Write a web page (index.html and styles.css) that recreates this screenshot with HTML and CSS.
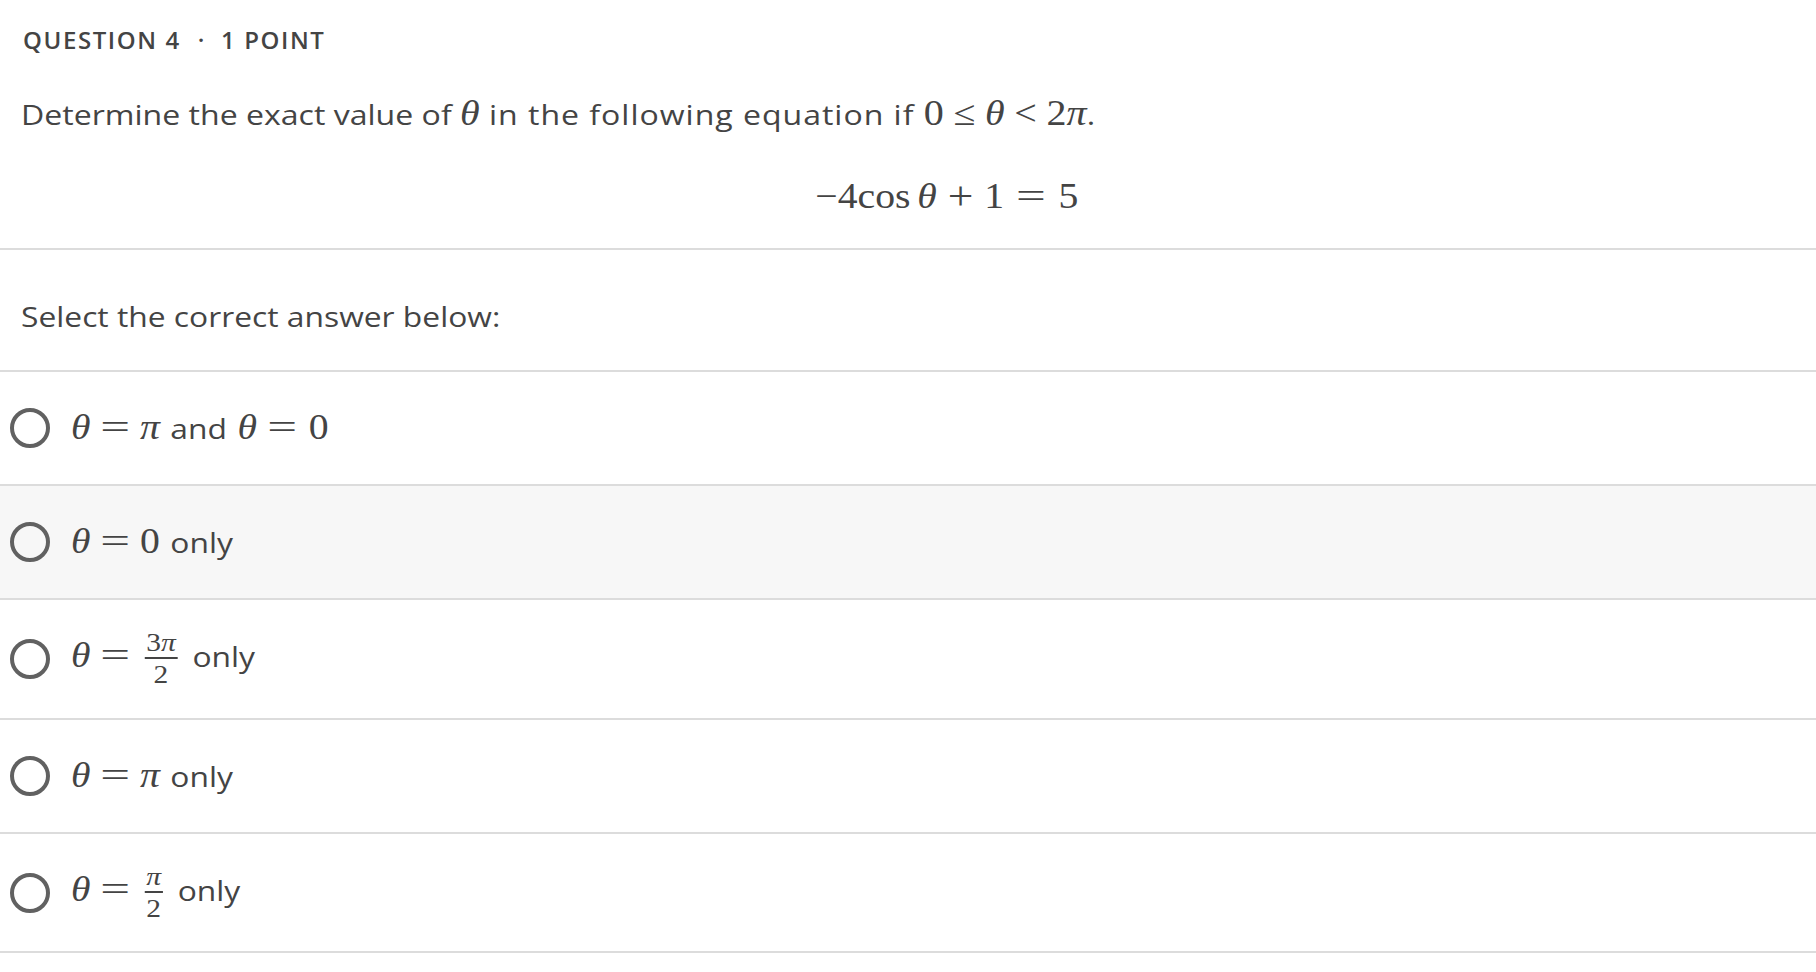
FILE: index.html
```html
<!DOCTYPE html>
<html>
<head>
<meta charset="utf-8">
<link rel="stylesheet" href="styles.css">
</head>
<body>
<div class="question">
  <div class="qhead">QUESTION 4<span class="sep">·</span>1 POINT</div>
  <p class="prompt"><span class="wide wide-prompt">Determine the exact value of <span class="m"><i>θ</i></span><span class="spread"> in the following equation if </span><span class="m">0<span class="rel">≤</span><i>θ</i><span class="rel">&lt;</span>2<i>π</i></span>.</span></p>
  <div class="display"><span class="m eqn">−4cos<span class="thin"></span><i>θ</i><span class="bin">+</span>1<span class="eq">=</span>5</span></div>
</div>
<div class="select"><span class="wide">Select the correct answer below:</span></div>
<div class="options">
  <div class="opt"><span class="radio"></span><span class="label"><span class="m"><i>θ</i><span class="eq">=</span><i>π</i></span> and <span class="m m-after"><i>θ</i><span class="eq">=</span>0</span></span></div>
  <div class="opt hover"><span class="radio"></span><span class="label"><span class="m"><i>θ</i><span class="eq">=</span>0</span> only</span></div>
  <div class="opt tall"><span class="radio"></span><span class="label"><span class="m"><i>θ</i><span class="eq">=</span><span class="frac"><span class="num">3<i>π</i></span><span class="den">2</span></span></span> only</span></div>
  <div class="opt"><span class="radio"></span><span class="label"><span class="m"><i>θ</i><span class="eq">=</span><i>π</i></span> only</span></div>
  <div class="opt tall last"><span class="radio"></span><span class="label"><span class="m"><i>θ</i><span class="eq">=</span><span class="frac"><span class="num"><i>π</i></span><span class="den">2</span></span></span> only</span></div>
</div>
</body>
</html>
```
FILE: styles.css
```css
* { box-sizing: border-box; }
body {
  margin: 0;
  background: #fff;
  color: #444;
  font-family: "Open Sans", sans-serif;
}
.qhead {
  padding: 24px 0 0 23px;
  font-size: 24px;
  font-weight: 600;
  line-height: 32px;
  letter-spacing: 1.6px;
  color: #444;
}
.sep { margin: 0 15px 0 17px; }
.wide {
  display: inline-block;
  transform: scaleX(1.135);
  transform-origin: 0 50%;
  white-space: nowrap;
}
.wide-prompt { transform: scaleX(1.145); }
.spread { letter-spacing: 0.85px; }
.prompt {
  margin: 38px 0 0;
  padding-left: 21px;
  font-size: 28px;
  line-height: 40px;
}
.prompt .rel { margin: 0 0.24em; }
.display {
  padding: 42px 0 31px 78px;
  text-align: center;
  font-size: 28px;
  line-height: 40px;
}
.m {
  font-family: "Liberation Serif", serif;
  font-size: 35px;
  color: #444;
}
.m i { font-style: italic; }
.eqn {
  display: inline-block;
  transform: scaleX(1.135);
}
.rel { margin: 0 0.28em; }
.bin { margin: 0 0.24em; font-size: 40px; line-height: 1; vertical-align: -1px; }
.thin { display: inline-block; width: 0.17em; }
.eq {
  display: inline-block;
  width: 22px;
  margin: 0 11px 0 10.5px;
  text-align: center;
  transform: scaleX(1.33);
}
.eqn .eq { margin: 0 13px 0 13px; }
.select {
  border-top: 2px solid #dcdcdc;
  height: 122px;
  padding: 45.5px 0 0 21px;
  font-size: 28px;
  line-height: 40px;
}
.opt {
  display: flex;
  align-items: center;
  height: 114px;
  padding-left: 10px;
  border-top: 2px solid #dcdcdc;
}
.opt.tall { height: 120px; }
.opt.last { height: 121px; border-bottom: 2px solid #dcdcdc; }
.opt.hover { background: #f7f7f7; }
.radio {
  flex-shrink: 0;
  width: 40px;
  height: 40px;
  border: 4px solid #616161;
  border-radius: 50%;
  margin-right: 21px;
}
.label {
  display: inline-block;
  font-size: 28px;
  line-height: 40px;
  white-space: nowrap;
  transform: scaleX(1.135);
  transform-origin: 0 50%;
}
.label .m { margin-right: 2px; }
.label .m-after { margin-left: 2px; }
.m-after .eq { margin: 0 12px 0 11.5px; }
.frac {
  display: inline-block;
  vertical-align: -16px;
  font-family: "Liberation Serif", serif;
  font-size: 26px;
  line-height: 24px;
  text-align: center;
  margin: 0 4px;
}
.num, .den { display: block; padding: 0 1.5px; }
.num { padding-bottom: 2px; border-bottom: 2px solid #444; }
.den { padding-top: 4px; }
```
